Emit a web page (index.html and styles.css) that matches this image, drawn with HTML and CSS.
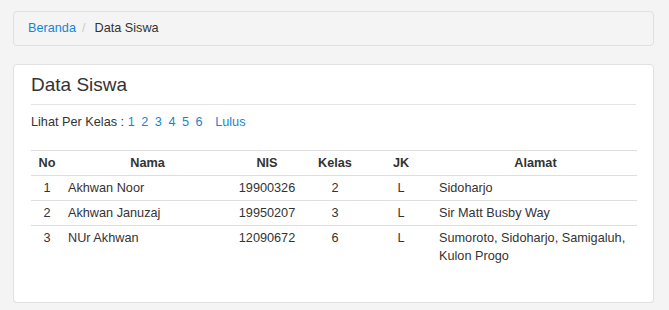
FILE: index.html
```html
<!DOCTYPE html>
<html>
<head>
<meta charset="utf-8">
<link rel="stylesheet" href="styles.css">
</head>
<body>
<div class="page">
  <ol class="breadcrumb">
    <li class="crumb"><a href="#" class="link">Beranda</a></li>
    <li class="crumb crumb-active">Data Siswa</li>
  </ol>
  <div class="panel">
    <h3 class="title">Data Siswa</h3>
    <hr class="rule">
    <p class="filter">Lihat Per Kelas : <a href="#" class="link num">1</a> <a href="#" class="link num">2</a> <a href="#" class="link num">3</a> <a href="#" class="link num">4</a> <a href="#" class="link num">5</a> <a href="#" class="link num">6</a> <a href="#" class="link lulus">Lulus</a></p>
    <table class="table">
      <thead>
        <tr>
          <th class="c-no">No</th>
          <th class="c-nama">Nama</th>
          <th class="c-nis">NIS</th>
          <th class="c-kelas">Kelas</th>
          <th class="c-jk">JK</th>
          <th class="c-alamat">Alamat</th>
        </tr>
      </thead>
      <tbody>
        <tr>
          <td class="center">1</td>
          <td>Akhwan Noor</td>
          <td class="center">19900326</td>
          <td class="center">2</td>
          <td class="center">L</td>
          <td>Sidoharjo</td>
        </tr>
        <tr>
          <td class="center">2</td>
          <td>Akhwan Januzaj</td>
          <td class="center">19950207</td>
          <td class="center">3</td>
          <td class="center">L</td>
          <td>Sir Matt Busby Way</td>
        </tr>
        <tr>
          <td class="center">3</td>
          <td>NUr Akhwan</td>
          <td class="center">12090672</td>
          <td class="center">6</td>
          <td class="center">L</td>
          <td>Sumoroto, Sidoharjo, Samigaluh, Kulon Progo</td>
        </tr>
      </tbody>
    </table>
  </div>
</div>
</body>
</html>
```
FILE: styles.css
```css
html, body {
  margin: 0;
  padding: 0;
  background: #f4f4f4;
}
body {
  font-family: "Liberation Sans", Arial, sans-serif;
  font-size: 12.7px;
  line-height: 18px;
  color: #333;
}
.page {
  padding: 11px 15px 0 13px;
  width: 641px;
}
.link {
  color: #1685d3;
  text-decoration: none;
}
.breadcrumb {
  list-style: none;
  margin: 0;
  padding: 8px 14px;
  line-height: 17px;
  background: #f4f4f4;
  border: 1px solid #e0e0e0;
  border-radius: 4px;
  display: flex;
}
.crumb + .crumb::before {
  content: "/";
  color: #ccc;
  padding: 0 9px 0 6px;
}
.crumb-active {
  color: #333;
}
.panel {
  margin-top: 18px;
  background: #fff;
  border: 1px solid #e1e1e1;
  border-radius: 4px;
  padding: 9px 17px 16px 17px;
  box-shadow: 0 1px 1px rgba(0,0,0,0.04);
}
.title {
  margin: 0;
  font-size: 19px;
  font-weight: normal;
  line-height: 22px;
  color: #333;
}
.rule {
  margin: 8px 0 0 0;
  border: 0;
  border-top: 1px solid #e4e4e4;
  height: 0;
}
.filter {
  margin: 8px 0 0 0;
}
.num {
  margin-right: 3px;
}
.lulus {
  margin-left: 6px;
}
.table {
  margin-top: 19px;
  margin-bottom: 18px;
  width: 606px;
  border-collapse: collapse;
  table-layout: fixed;
}
.table th,
.table td {
  border-top: 1px solid #dedede;
  padding: 3px 5px;
  vertical-align: top;
  text-align: left;
}
.table th {
  font-weight: bold;
  text-align: center;
}
.table .center {
  text-align: center;
}
.c-no { width: 22px; }
.c-nama { width: 159px; }
.c-nis { width: 60px; }
.c-kelas { width: 56px; }
.c-jk { width: 56px; }
.c-alamat { width: 193px; }
```
